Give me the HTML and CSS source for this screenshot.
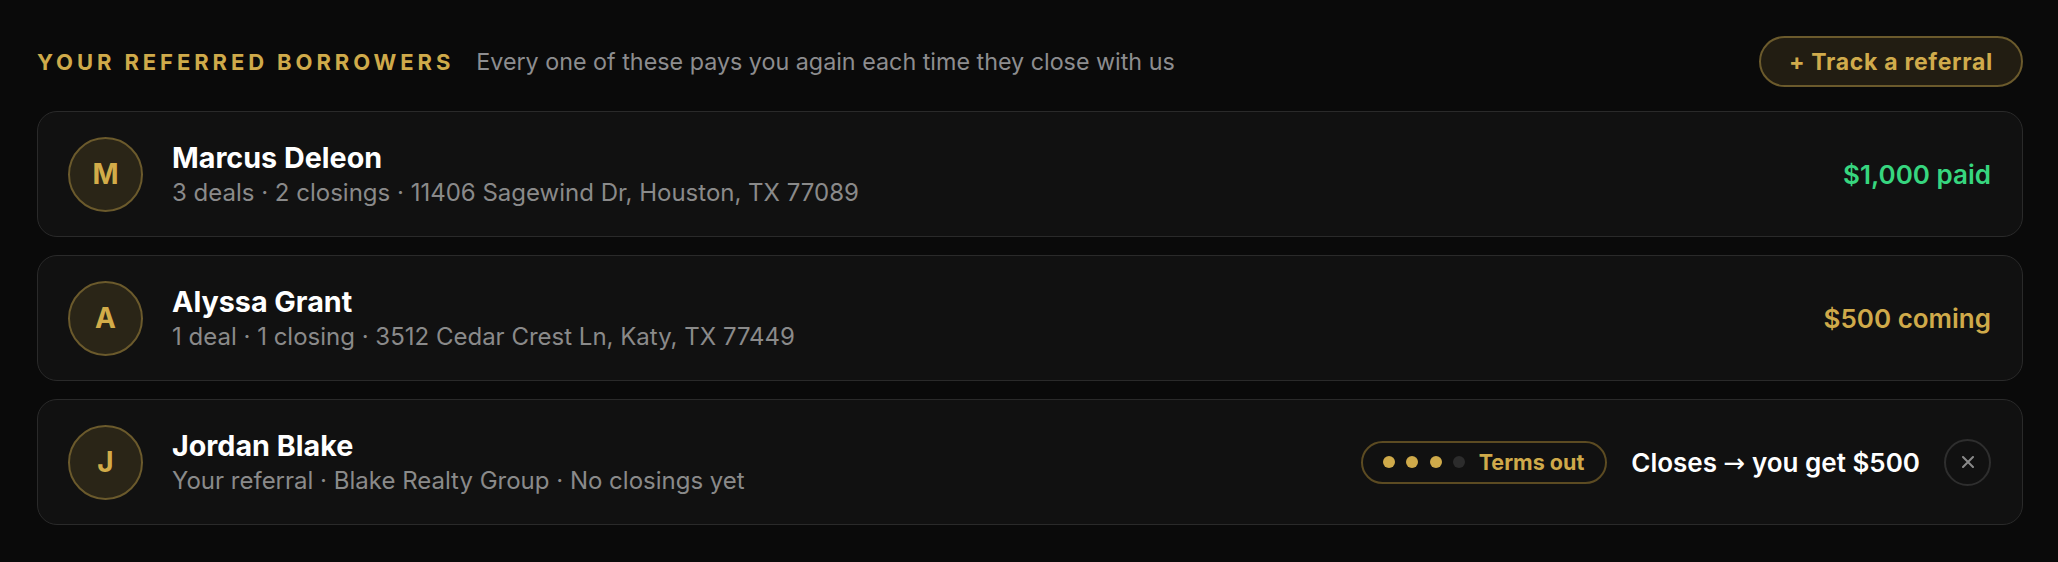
FILE: index.html
```html
<!DOCTYPE html>
<html lang="en">
<head>
<meta charset="utf-8">
<title>Your referred borrowers</title>
<link rel="stylesheet" href="styles.css">
</head>
<body>
<main class="page">
  <header class="head">
    <div class="head-left">
      <h2 class="title">YOUR REFERRED BORROWERS</h2>
      <span class="subtitle">Every one of these pays you again each time they close with us</span>
    </div>
    <button class="track-btn">+ Track a referral</button>
  </header>

  <ul class="list">
    <li class="card">
      <div class="avatar">M</div>
      <div class="info">
        <div class="name">Marcus Deleon</div>
        <div class="meta">3 deals · 2 closings · 11406 Sagewind Dr, Houston, TX 77089</div>
      </div>
      <div class="amount paid">$1,000 paid</div>
    </li>
    <li class="card">
      <div class="avatar">A</div>
      <div class="info">
        <div class="name">Alyssa Grant</div>
        <div class="meta">1 deal · 1 closing · 3512 Cedar Crest Ln, Katy, TX 77449</div>
      </div>
      <div class="amount coming">$500 coming</div>
    </li>
    <li class="card">
      <div class="avatar">J</div>
      <div class="info">
        <div class="name">Jordan Blake</div>
        <div class="meta">Your referral · Blake Realty Group · No closings yet</div>
      </div>
      <div class="actions">
        <div class="pill">
          <span class="dot on"></span><span class="dot on"></span><span class="dot on"></span><span class="dot"></span>
          <span class="pill-text">Terms out</span>
        </div>
        <div class="closes">Closes <span class="arrow">→</span> you get $500</div>
        <button class="close-btn" aria-label="Remove">
          <svg width="12" height="12" viewBox="0 0 12 12"><path d="M1 1L11 11M11 1L1 11" stroke="#8a8a8a" stroke-width="2" stroke-linecap="round"/></svg>
        </button>
      </div>
    </li>
  </ul>
</main>
</body>
</html>
```

FILE: styles.css
```css
* { box-sizing: border-box; }
html, body { margin: 0; padding: 0; }
body {
  background: #0a0a0a;
  font-family: Inter, "Noto Sans", "Liberation Sans", sans-serif;
  color: #ffffff;
  height: 562px;
  overflow: hidden;
}
.page {
  padding: 36px 35px 0 37px;
}
.head {
  display: flex;
  align-items: center;
  justify-content: space-between;
  height: 51px;
}
.head-left {
  display: flex;
  align-items: baseline;
  gap: 22px;
}
.title {
  margin: 0;
  font-size: 22px;
  font-weight: 700;
  letter-spacing: 0.178em;
  color: #cfaa4a;
}
.subtitle {
  font-size: 23.3px;
  color: #8d8d8f;
}
.track-btn {
  height: 51px;
  padding: 0 28px;
  border-radius: 26px;
  border: 2px solid #6b5a2c;
  background: #221d12;
  color: #d0ab4c;
  font-family: inherit;
  font-size: 23px;
  font-weight: 700;
  letter-spacing: 0.03em;
  cursor: pointer;
}
.list {
  list-style: none;
  margin: 24px 0 0;
  padding: 0;
  display: flex;
  flex-direction: column;
  gap: 18px;
}
.card {
  display: flex;
  align-items: center;
  height: 126px;
  padding: 0 31px 0 30px;
  background: #111111;
  border: 1px solid #2a2a2a;
  border-radius: 20px;
}
.avatar {
  flex: none;
  width: 75px;
  height: 75px;
  border-radius: 50%;
  border: 2px solid #6b5a2c;
  background: #2a2517;
  color: #d2ac49;
  font-size: 28px;
  font-weight: 700;
  display: flex;
  align-items: center;
  justify-content: center;
}
.info {
  flex: 1;
  margin-left: 29px;
}
.name {
  font-size: 28.7px;
  font-weight: 700;
  line-height: 36px;
  color: #ffffff;
}
.meta {
  font-size: 24px;
  line-height: 32px;
  margin-top: 1px;
  color: #8a8a8a;
}
.amount {
  font-size: 26px;
  font-weight: 600;
}
.paid { color: #37d67f; }
.coming { color: #cfaa4a; }
.actions {
  display: flex;
  align-items: center;
  gap: 24px;
}
.pill {
  display: flex;
  align-items: center;
  height: 43px;
  padding: 0 21px 0 20px;
  border: 2px solid #5c4b22;
  border-radius: 22px;
}
.dot {
  width: 12px;
  height: 12px;
  border-radius: 50%;
  background: #2c2c2c;
  margin-right: 11.5px;
}
.dot.on { background: #cfaa4a; }
.pill-text {
  margin-left: 2px;
  font-size: 21.5px;
  font-weight: 700;
  color: #cfaa4a;
}
.closes {
  font-size: 26px;
  font-weight: 600;
  color: #ffffff;
}
.arrow {
  font-family: "DejaVu Sans", sans-serif;
  font-weight: 400;
}
.close-btn {
  width: 47px;
  height: 47px;
  border-radius: 50%;
  border: 2px solid #2e2e2e;
  background: transparent;
  display: flex;
  align-items: center;
  justify-content: center;
  padding: 0;
  cursor: pointer;
}
```
